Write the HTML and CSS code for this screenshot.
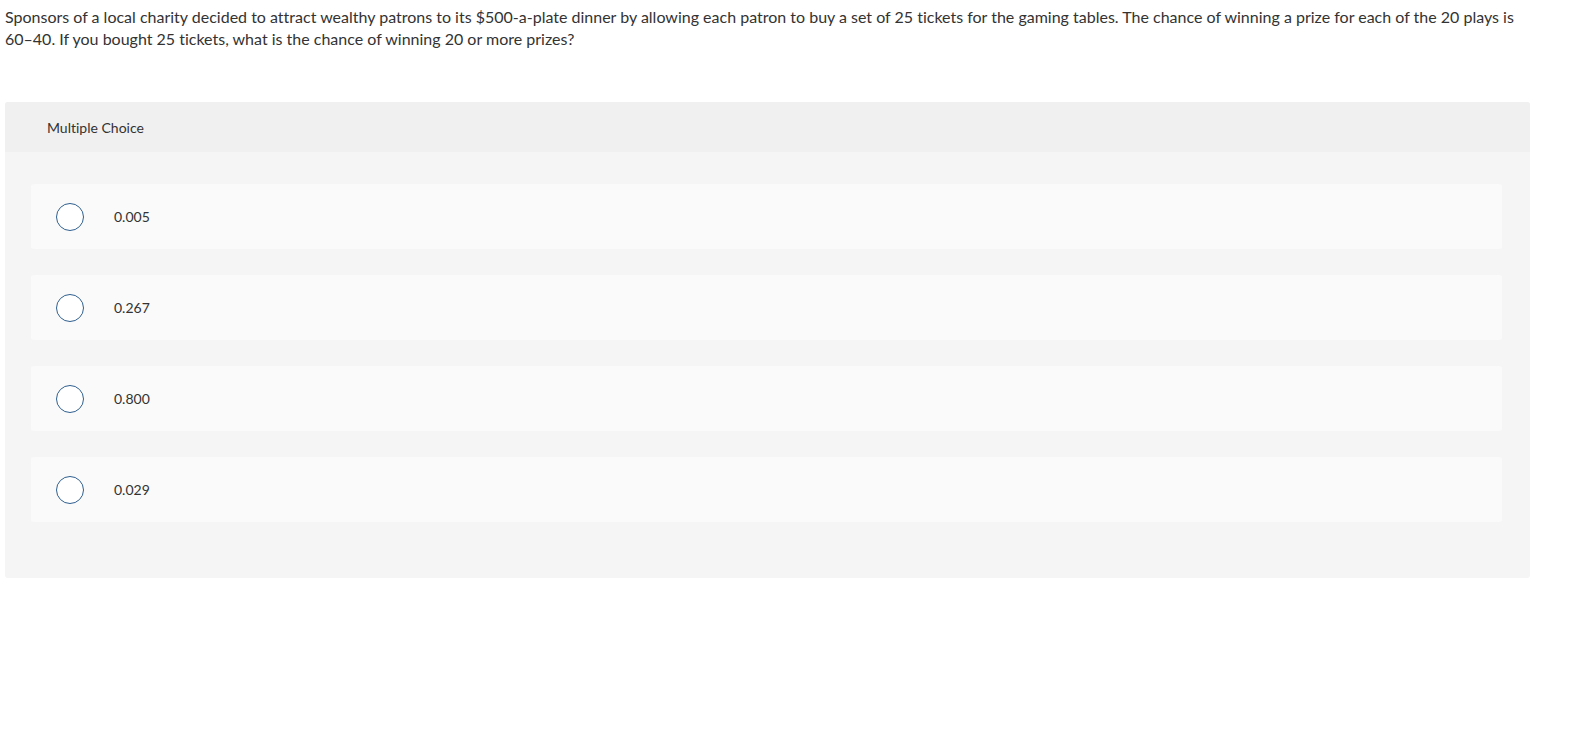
FILE: index.html
```html
<!DOCTYPE html>
<html>
<head>
<meta charset="utf-8">
<link rel="stylesheet" href="styles.css">
</head>
<body>
<div class="page">
  <p class="question">Sponsors of a local charity decided to attract wealthy patrons to its $500-a-plate dinner by allowing each patron to buy a set of 25 tickets for the gaming tables. The chance of winning a prize for each of the 20 plays is 60–40. If you bought 25 tickets, what is the chance of winning 20 or more prizes?</p>
  <div class="mc">
    <div class="mc-header">Multiple Choice</div>
    <div class="mc-body">
      <label class="option"><span class="radio"></span><span class="opt-text">0.005</span></label>
      <label class="option"><span class="radio"></span><span class="opt-text">0.267</span></label>
      <label class="option"><span class="radio"></span><span class="opt-text">0.800</span></label>
      <label class="option"><span class="radio"></span><span class="opt-text">0.029</span></label>
    </div>
  </div>
</div>
</body>
</html>
```

FILE: styles.css
```css
html, body {
  margin: 0;
  padding: 0;
  background: #ffffff;
}
body {
  font-family: "Lato", "Liberation Sans", sans-serif;
  font-variant-ligatures: none;
  color: #333333;
}
.page {
  padding: 6px 54px 0 5px;
}
.question {
  margin: 0;
  font-size: 16px;
  line-height: 22px;
}
.mc {
  margin-top: 52px;
  border-radius: 3px;
  overflow: hidden;
  background: #f5f5f5;
}
.mc-header {
  height: 50px;
  background: #f0f0f0;
  display: flex;
  align-items: center;
  padding-left: 42px;
  font-size: 14px;
  color: #333;
}
.mc-body {
  padding: 32px 28px 56px 26px;
  display: flex;
  flex-direction: column;
  gap: 26px;
}
.option {
  height: 65px;
  background: #fafafa;
  border-radius: 3px;
  display: flex;
  align-items: center;
  padding-left: 25px;
}
.radio {
  width: 26px;
  height: 26px;
  border: 1.5px solid #2f5f8f;
  border-radius: 50%;
  background: #fff;
  flex: none;
}
.opt-text {
  margin-left: 30px;
  font-size: 14px;
  color: #333;
}
```
